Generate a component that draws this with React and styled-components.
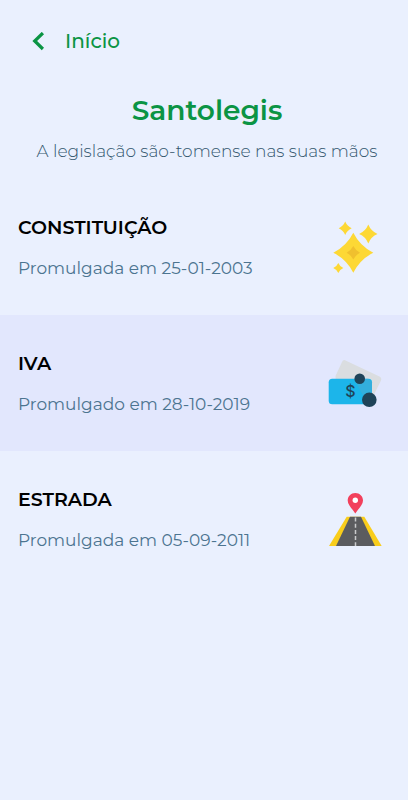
import React from "react";
import styled, { createGlobalStyle } from "styled-components";

const GlobalStyle = createGlobalStyle`
  * {
    box-sizing: border-box;
  }
  body {
    margin: 0;
    background-color: #eaf0fe;
    font-family: "Montserrat", "Inter", sans-serif;
  }
`;

const Page = styled.div`
  min-height: 100vh;
  background-color: #eaf0fe;
`;

const TopBar = styled.nav`
  display: flex;
  padding: 24px 32px 0;
`;

const BackLink = styled.a`
  display: flex;
  align-items: center;
  gap: 19px;
  color: #0b9444;
  font-size: 20px;
  font-weight: 500;
  line-height: 35px;
  text-decoration: none;
`;

const Header = styled.header`
  padding: 31px 12px 15px 18px;
  text-align: center;
`;

const Title = styled.h1`
  margin: 0;
  color: #0b9444;
  font-size: 28px;
  font-weight: 600;
  line-height: 40px;
`;

const Subtitle = styled.p`
  margin: 8px 0 0;
  color: #34586f;
  font-size: 17px;
  font-weight: 300;
  line-height: 26px;
`;

const List = styled.ul`
  margin: 0;
  padding: 0;
  list-style: none;
`;

const LawLink = styled.a`
  display: flex;
  align-items: center;
  justify-content: space-between;
  padding: 37px 26px 35px 18px;
  background-color: ${(props) => (props.$shaded ? "#e2e7fd" : "transparent")};
  text-decoration: none;
`;

const LawName = styled.h2`
  margin: 0;
  color: #000;
  font-size: 19px;
  font-weight: 600;
  line-height: 24px;
`;

const LawDate = styled.p`
  margin: 16px 0 0;
  color: #4c7490;
  font-size: 17px;
  font-weight: 400;
  line-height: 24px;
`;

const Icon = styled.svg`
  flex: none;
  width: 54px;
  height: 54px;
`;

const ChevronLeft = () => (
  <svg width="14" height="20" viewBox="0 0 14 20" aria-hidden="true">
    <path d="M10.900 1L2.700 9l8.200 8" fill="none" stroke="#0b9444" strokeWidth="3.2" />
  </svg>
);

const Stars = () => (
  <Icon viewBox="0 0 54 54" aria-hidden="true">
    <g fill="#fdd835">
      <path d="M25.300 11.700Q32 25 45.300 31.700Q32 38.400 25.300 51.700Q18.600 38.400 5.300 31.700Q18.600 25 25.300 11.700Z" />
      <path d="M17.200.500Q19.200 5.300 23.700 7.300Q19.200 9.300 17.200 14Q15.200 9.300 10.700 7.300Q15.200 5.300 17.200.500Z" />
      <path d="M40.300 3.600Q43 10.300 49.500 13Q43 15.700 40.300 22.400Q37.600 15.700 31.100 13Q37.600 10.300 40.300 3.600Z" />
      <path d="M10.300 42Q11.800 45.500 15.300 47Q11.800 48.500 10.300 52Q8.800 48.500 5.300 47Q8.800 45.500 10.300 42Z" />
    </g>
    <path
      d="M25.300 25Q27.600 29.400 32 31.700Q27.600 34 25.300 38.400Q23 34 18.600 31.700Q23 29.400 25.300 25Z"
      fill="#f0c02e"
    />
  </Icon>
);

const Money = () => (
  <Icon viewBox="0 0 54 54" aria-hidden="true">
    <path
      d="M17 3.200L51.500 19.600Q54 21 53 23.500L46 37.500L8 30L7.500 19L14 5Q15 2.500 17 3.200Z"
      fill="#dadde0"
    />
    <rect x="0.700" y="21.700" width="43.300" height="25.500" rx="3.500" fill="#1cb5ea" />
    <path d="M27.500 25L38 44L44 37V25L40 21.700H35Z" fill="#4aa9cf" opacity="0.500" />
    <text
      x="22.300"
      y="40"
      textAnchor="middle"
      fontFamily="Inter, sans-serif"
      fontSize="16"
      fontWeight="500"
      fill="#1f4358"
    >
      $
    </text>
    <circle cx="31.700" cy="21.700" r="5.300" fill="#1f4358" />
    <circle cx="41.300" cy="42.800" r="7.300" fill="#1f4358" />
  </Icon>
);

const Road = () => (
  <Icon viewBox="0 0 54 54" aria-hidden="true">
    <path d="M18.700 23.800H36.300L53.700 53H1Z" fill="#f9cd1b" />
    <path d="M22 23.800H33L47 53H8Z" fill="#5b5c5f" />
    <path d="M27.500 24.500V53" stroke="#c9cacc" strokeWidth="1.500" strokeDasharray="4 2.200" />
    <path
      d="M27.300 0C31.700 0 35 3.300 35 7.500C35 12 30 16 27.300 20.500C24.600 16 19.700 12 19.700 7.500C19.700 3.300 23 0 27.300 0Z"
      fill="#f2405c"
    />
    <circle cx="27.300" cy="7.200" r="2.700" fill="#fff" />
  </Icon>
);

const laws = [
  { name: "CONSTITUIÇÃO", date: "Promulgada em 25-01-2003", icon: <Stars /> },
  { name: "IVA", date: "Promulgado em 28-10-2019", icon: <Money /> },
  { name: "ESTRADA", date: "Promulgada em 05-09-2011", icon: <Road /> }
];

export default function App() {
  return (
    <Page>
      <GlobalStyle />
      <TopBar>
        <BackLink href="#inicio">
          <ChevronLeft />
          Início
        </BackLink>
      </TopBar>
      <Header>
        <Title>Santolegis</Title>
        <Subtitle>A legislação são-tomense nas suas mãos</Subtitle>
      </Header>
      <List>
        {laws.map((law, index) => (
          <li key={law.name}>
            <LawLink href={"#" + law.name.toLowerCase()} $shaded={index % 2 === 1}>
              <div>
                <LawName>{law.name}</LawName>
                <LawDate>{law.date}</LawDate>
              </div>
              {law.icon}
            </LawLink>
          </li>
        ))}
      </List>
    </Page>
  );
}
